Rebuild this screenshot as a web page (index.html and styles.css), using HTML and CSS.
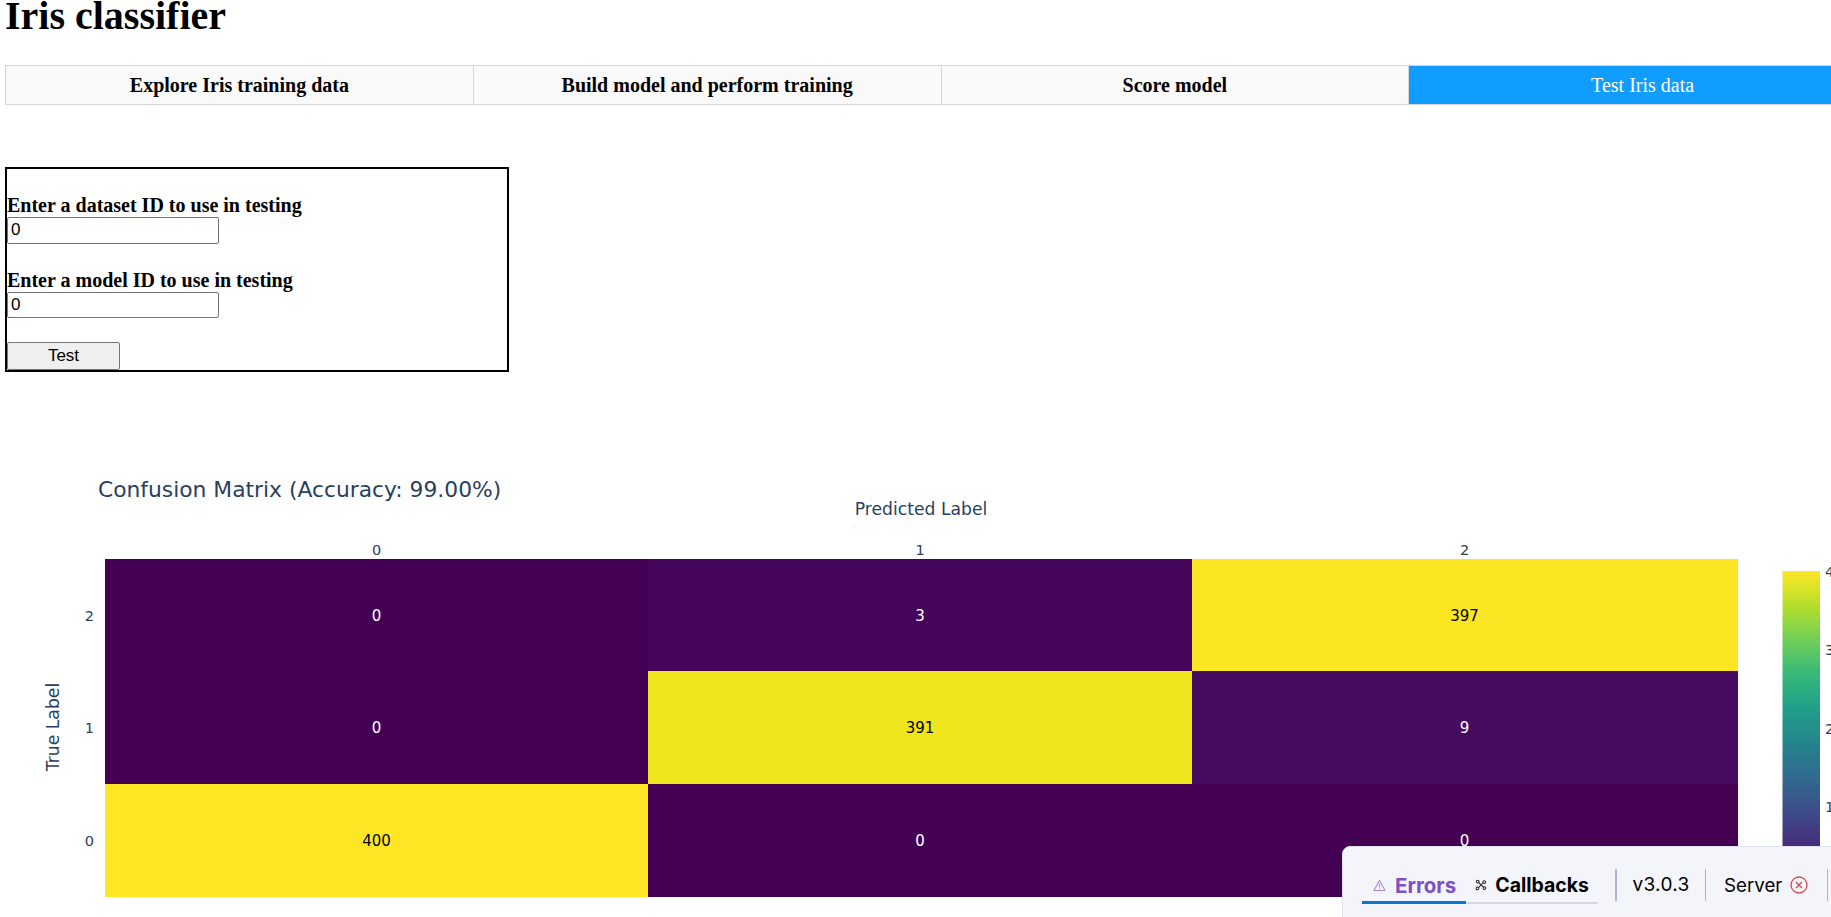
FILE: index.html

```html
<!DOCTYPE html>
<html lang="en">
<head>
<meta charset="utf-8"/>
<title>Iris classifier</title>
<link rel="stylesheet" href="styles.css">
</head>
<body>
<h1 class="page-title">Iris classifier</h1>

<div class="tabs">
  <div class="tab">Explore Iris training data</div>
  <div class="tab">Build model and perform training</div>
  <div class="tab">Score model</div>
  <div class="tab tab-selected">Test Iris data</div>
</div>

<div class="test-form">
  <label class="field-label">Enter a dataset ID to use in testing</label>
  <input class="field-input" type="text" value="0">
  <label class="field-label field-label-next">Enter a model ID to use in testing</label>
  <input class="field-input" type="text" value="0">
  <button class="test-button">Test</button>
</div>

<svg class="plot" viewBox="5 440 1872 500" width="1872" height="500">
  <defs>
    <linearGradient id="viridis" x1="0" y1="1" x2="0" y2="0">
      <stop offset="0" stop-color="#440154"/>
      <stop offset="0.111" stop-color="#482878"/>
      <stop offset="0.222" stop-color="#3e4989"/>
      <stop offset="0.333" stop-color="#31688e"/>
      <stop offset="0.444" stop-color="#26828e"/>
      <stop offset="0.556" stop-color="#1f9e89"/>
      <stop offset="0.667" stop-color="#35b779"/>
      <stop offset="0.778" stop-color="#6ece58"/>
      <stop offset="0.889" stop-color="#b5de2b"/>
      <stop offset="1" stop-color="#fde725"/>
    </linearGradient>
  </defs>

  <text class="plot-title" x="98" y="497">Confusion Matrix (Accuracy: 99.00%)</text>
  <text class="axis-title" x="921" y="515" text-anchor="middle">Predicted Label</text>
  <text class="axis-title" x="0" y="0" text-anchor="middle" transform="translate(59 727) rotate(-90)">True Label</text>

  <text class="tick" x="376.5" y="555" text-anchor="middle">0</text>
  <text class="tick" x="920" y="555" text-anchor="middle">1</text>
  <text class="tick" x="1464.5" y="555" text-anchor="middle">2</text>
  <text class="tick" x="94" y="621" text-anchor="end">2</text>
  <text class="tick" x="94" y="733" text-anchor="end">1</text>
  <text class="tick" x="94" y="846" text-anchor="end">0</text>

  <rect x="105" y="559" width="543" height="112" fill="#440154"/>
  <rect x="648" y="559" width="544" height="112" fill="#45055a"/>
  <rect x="1192" y="559" width="546" height="112" fill="#fae622"/>
  <rect x="105" y="671" width="543" height="113" fill="#440154"/>
  <rect x="648" y="671" width="544" height="113" fill="#efe51c"/>
  <rect x="1192" y="671" width="546" height="113" fill="#460b5e"/>
  <rect x="105" y="784" width="543" height="113" fill="#fde725"/>
  <rect x="648" y="784" width="544" height="113" fill="#440154"/>
  <rect x="1192" y="784" width="546" height="113" fill="#440154"/>

  <text class="cell" x="376.5" y="621" text-anchor="middle" fill="#fff">0</text>
  <text class="cell" x="920" y="621" text-anchor="middle" fill="#fff">3</text>
  <text class="cell" x="1464.5" y="621" text-anchor="middle" fill="#000">397</text>
  <text class="cell" x="376.5" y="733" text-anchor="middle" fill="#fff">0</text>
  <text class="cell" x="920" y="733" text-anchor="middle" fill="#000">391</text>
  <text class="cell" x="1464.5" y="733" text-anchor="middle" fill="#fff">9</text>
  <text class="cell" x="376.5" y="846" text-anchor="middle" fill="#000">400</text>
  <text class="cell" x="920" y="846" text-anchor="middle" fill="#fff">0</text>
  <text class="cell" x="1464.5" y="846" text-anchor="middle" fill="#fff">0</text>

  <rect x="1782.5" y="571" width="37.5" height="313" fill="url(#viridis)"/>
  <text class="tick" x="1825" y="577">400</text>
  <text class="tick" x="1825" y="655">300</text>
  <text class="tick" x="1825" y="734">200</text>
  <text class="tick" x="1825" y="812">100</text>
</svg>

<div class="debug-bar">
  <div class="debug-tabs">
    <div class="debug-tab debug-tab-active">
      <svg class="errors-icon" viewBox="0 0 14 14" width="13" height="13">
        <path d="M7 1.6 13 12.4H1Z" fill="none" stroke="#a583d8" stroke-width="1.1" stroke-linejoin="round"/>
        <path d="M7 5.2V9M7 10.2v1" stroke="#a583d8" stroke-width="1.1"/>
      </svg>
      Errors
    </div>
    <div class="debug-tab debug-tab-callbacks">
      <svg class="callbacks-icon" viewBox="0 0 14 14" width="12" height="12">
        <g fill="none" stroke="#222" stroke-width="1.2">
          <circle cx="3.2" cy="3" r="1.6"/>
          <circle cx="10.8" cy="3.6" r="1.6"/>
          <circle cx="2.8" cy="11" r="1.6"/>
          <circle cx="11" cy="10.6" r="1.6"/>
          <path d="M4.4 4.2 10 9.6M9.4 4.4 4.2 10"/>
        </g>
      </svg>
      Callbacks
    </div>
  </div>
  <div class="debug-sep debug-sep-wide"></div>
  <div class="debug-version">v3.0.3</div>
  <div class="debug-sep"></div>
  <div class="debug-server">
    Server
    <svg viewBox="0 0 18 18" width="18" height="18">
      <circle cx="9" cy="9" r="8" fill="none" stroke="#d2494f" stroke-width="1.3"/>
      <path d="M6 6l6 6M12 6l-6 6" stroke="#d2494f" stroke-width="1.3"/>
    </svg>
  </div>
  <div class="debug-sep"></div>
</div>
</body>
</html>
```

FILE: styles.css

```css
html {
  overflow: hidden;
}
body {
  margin: 0;
  padding: 0 0 0 5px;
  width: 1872px;
  background: white;
  font-family: 'Liberation Serif', serif;
  color: black;
}
.page-title {
  margin: 0;
  height: 65px;
  font-size: 40px;
  line-height: 31px;
  font-weight: bold;
}
.tabs {
  display: flex;
  width: 1872px;
  height: 40px;
}
.tab {
  flex: 1;
  box-sizing: border-box;
  display: flex;
  align-items: center;
  justify-content: center;
  background-color: #f9f9f9;
  border: 1px solid #d6d6d6;
  border-left: none;
  font-size: 20px;
  font-weight: bold;
}
.tab:first-child {
  border-left: 1px solid #d6d6d6;
}
.tab-selected {
  background-color: #119dff;
  color: white;
  font-weight: normal;
  border-top-color: #b9dcf5;
}
.test-form {
  box-sizing: border-box;
  width: 504px;
  height: 205px;
  margin-top: 62px;
  padding: 26px 0 0 0;
  border: 2px solid black;
  display: flex;
  flex-direction: column;
  align-items: flex-start;
}
.field-label {
  font-size: 20px;
  font-weight: bold;
  line-height: 21px;
}
.field-label-next {
  margin-top: 26px;
}
.field-input {
  box-sizing: border-box;
  width: 212px;
  height: 27px;
  margin: 1px 0 0 0;
  padding: 0 3px;
  border: 1px solid #767676;
  border-radius: 2px;
  font-family: 'Liberation Sans', sans-serif;
  font-size: 17px;
}
.test-button {
  box-sizing: border-box;
  width: 113px;
  height: 28px;
  margin-top: 24px;
  padding: 0;
  border: 1px solid #767676;
  border-radius: 2px;
  background-color: #efefef;
  font-family: 'Liberation Sans', sans-serif;
  font-size: 17px;
}
.plot {
  display: block;
  margin-top: 68px;
}
.plot text {
  font-family: 'DejaVu Sans', sans-serif;
}
.plot-title {
  font-size: 21.8px;
  fill: #2a3f5f;
}
.axis-title {
  font-size: 17.2px;
  fill: #2a3f5f;
}
.tick {
  font-size: 14.5px;
  fill: #2a3f5f;
}
.cell {
  font-size: 15px;
}
.debug-bar {
  position: fixed;
  left: 1342px;
  top: 846px;
  width: 520px;
  height: 80px;
  box-sizing: border-box;
  padding: 22px 0 0 19px;
  display: flex;
  align-items: flex-start;
  background: #f4f5fa;
  border: 1px solid #dfe2f0;
  border-radius: 8px 0 0 0;
  font-family: 'Inter', sans-serif;
  font-size: 19.5px;
}
.debug-tabs {
  display: flex;
  height: 33px;
  border-bottom: 2px solid #d3d7e3;
}
.debug-tab {
  display: flex;
  align-items: center;
  gap: 9px;
  box-sizing: border-box;
  height: 35px;
  padding: 0 10px 0 11px;
  border-bottom: 3px solid transparent;
  font-weight: 700;
  color: black;
}
.debug-tab-active {
  color: #7e50c5;
  font-size: 20.5px;
  border-bottom-color: #0a76cf;
}
.debug-tab-callbacks {
  gap: 8px;
  padding: 0 9px;
}
.debug-sep {
  width: 1px;
  height: 32px;
  background: #aab4ce;
}
.debug-sep-wide {
  width: 2px;
  margin-left: 17px;
}
.debug-version {
  width: 88px;
  line-height: 32px;
  text-align: center;
  font-size: 19px;
  letter-spacing: 0.3px;
}
.debug-server {
  display: flex;
  align-items: center;
  gap: 8px;
  height: 32px;
  padding: 0 19px 0 18px;
  font-size: 18.7px;
}
```
